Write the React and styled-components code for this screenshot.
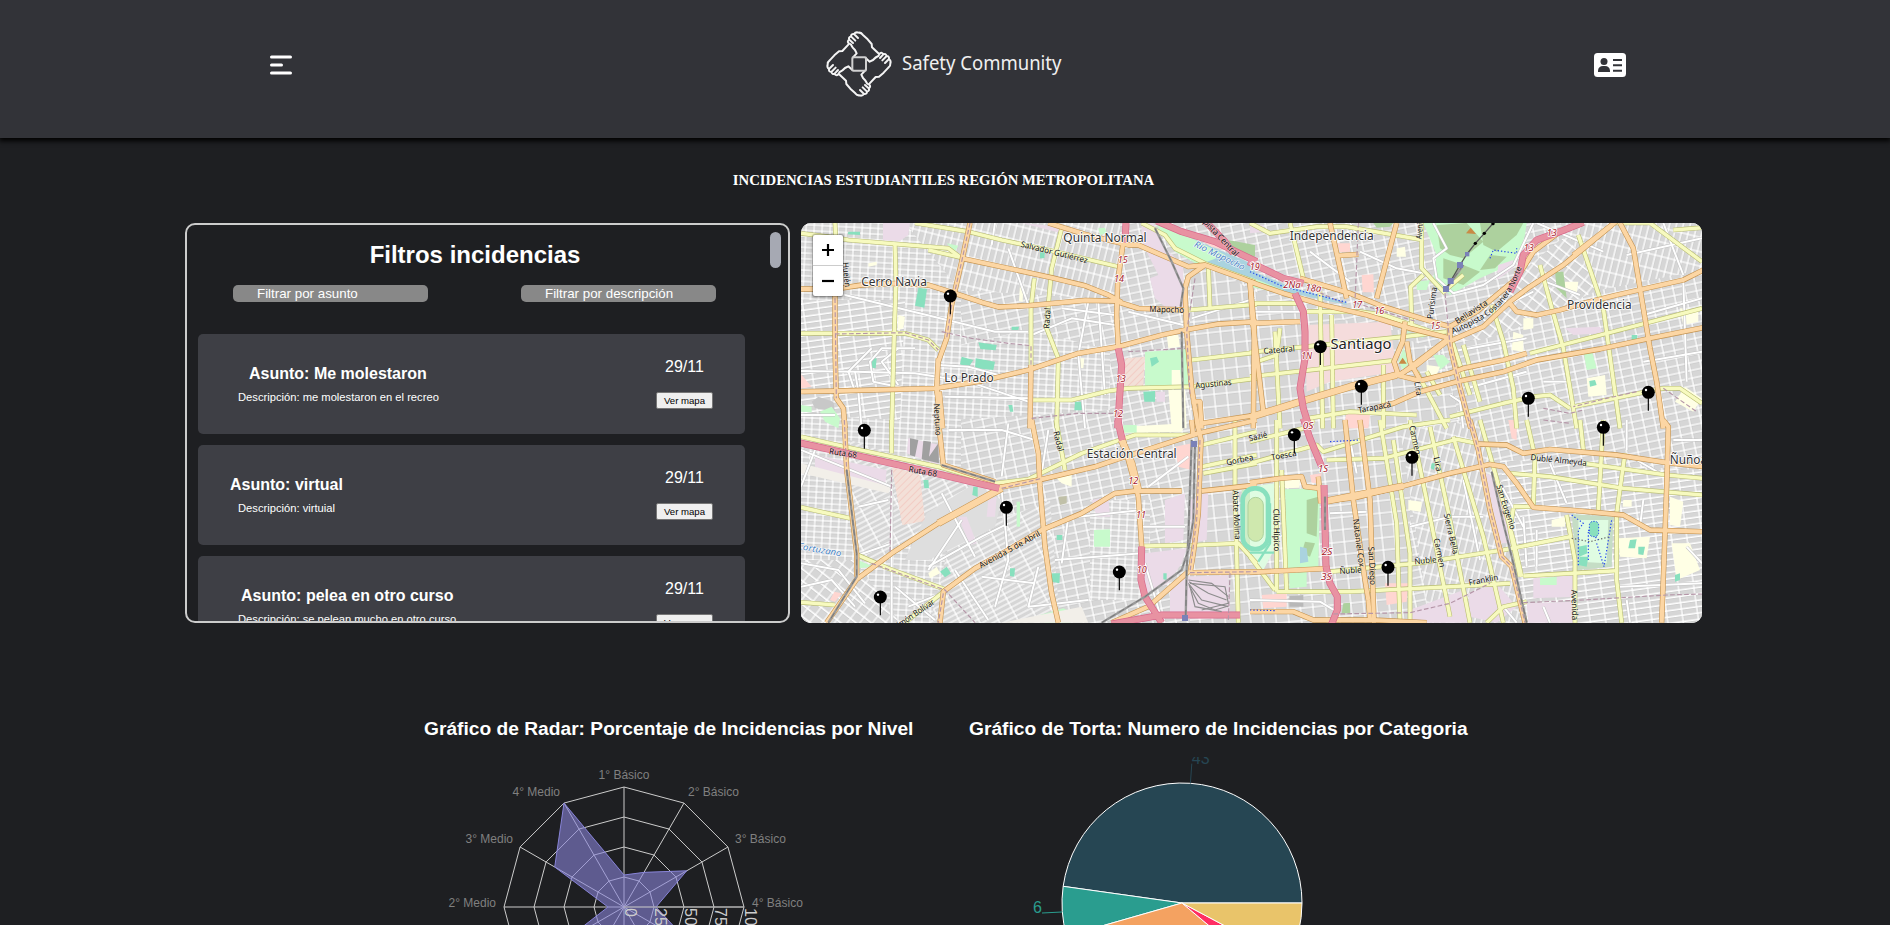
import React from 'react';
import styled, { createGlobalStyle } from 'styled-components';

const GlobalStyle = createGlobalStyle`
  *, *::before, *::after { box-sizing: border-box; }
  html, body { margin: 0; padding: 0; background: #1e1f22; overflow: hidden; }
`;

const Page = styled.div`
  display: flex;
  flex-direction: column;
  height: 925px;
  overflow: hidden;
  background: #1e1f22;
  color: #fff;
  font-family: "Liberation Sans", Arial, sans-serif;
`;

const Header = styled.header`
  display: grid;
  grid-template-columns: 1fr auto 1fr;
  align-items: center;
  flex: none;
  height: 138px;
  padding: 0 264px 10px 260px;
  background: #323338;
  box-shadow: 0 2px 5px 1px #000;
`;

const HeaderIcon = styled.svg`
  display: block;
  justify-self: ${(p) => p.$side};
  margin-left: ${(p) => (p.$side === 'start' ? '10px' : '0')};
  margin-top: 2px;
`;

const Brand = styled.div`
  display: flex;
  align-items: center;
  gap: 9px;
`;

const BrandName = styled.span`
  width: 160px;
  font: 20px/28px "Noto Sans", sans-serif;
  color: #f0f0f0;
  white-space: nowrap;
  transform: scaleX(0.925);
  transform-origin: left;
  margin-top: -2px;
`;

const PageTitle = styled.h1`
  margin: 33px 0 34px;
  font: bold 14.72px/18px "Liberation Serif", "Times New Roman", serif;
  text-align: center;
  padding-right: 3px;
`;

const Overview = styled.section`
  display: flex;
  flex: none;
  gap: 11px;
  height: 400px;
  padding-left: 185px;
`;

const Panel = styled.div`
  display: flex;
  width: 605px;
  padding: 0 7px 0 11px;
  border: 2px solid #ccc;
  border-radius: 10px;
  overflow: hidden;
`;

const PanelBody = styled.div`
  width: 547px;
  height: 396px;
  overflow: hidden;
`;

const PanelTitle = styled.h2`
  margin: 16px 0 16px;
  padding-left: 7px;
  font-size: 24px;
  line-height: 28px;
  text-align: center;
`;

const Filters = styled.div`
  display: flex;
  justify-content: space-between;
  padding: 0 29px 0 35px;
  margin-bottom: 32px;
`;

const FilterInput = styled.input`
  width: 195px;
  height: 17px;
  padding: 0 24px;
  border: 0;
  border-radius: 5px;
  background: #888;
  color: #fff;
  font: 13.33px/17px "Liberation Sans", Arial, sans-serif;
  &::placeholder { color: #fff; opacity: 1; }
`;

const Cards = styled.div`
  display: flex;
  flex-direction: column;
  gap: 11px;
`;

const Card = styled.article`
  display: flex;
  justify-content: space-between;
  flex: none;
  height: 100px;
  padding: 0 32px 0 0;
  border-radius: 5px;
  background: #3e3f45;
`;

const CardText = styled.div`
  padding: 31px 0 0 40px;
`;

const Subject = styled.h3`
  margin: 0 0 8px ${(p) => p.$indent}px;
  font-size: 16px;
  line-height: 18px;
`;

const Description = styled.p`
  margin: 0;
  font-size: 11.2px;
  line-height: 13px;
`;

const CardSide = styled.div`
  display: flex;
  flex-direction: column;
  align-items: center;
  padding-top: 24px;
`;

const DateText = styled.span`
  font-size: 16px;
  line-height: 18px;
`;

const MapButton = styled.button`
  width: 57px;
  height: 17px;
  margin-top: 16px;
  padding: 0;
  border: 1px solid #767676;
  border-radius: 2px;
  background: #efefef;
  color: #000;
  font: 9.6px/14px "Liberation Sans", Arial, sans-serif;
`;

const ScrollThumb = styled.div`
  width: 11px;
  height: 36px;
  margin: 7px 0 0 auto;
  border-radius: 6px;
  background: #a6a9b3;
`;

const MapBox = styled.div`
  position: relative;
  width: 901px;
  height: 400px;
  border-radius: 10px;
  overflow: hidden;
  background: #ddd;
  svg { display: block; }
`;

const ZoomControl = styled.div`
  position: absolute;
  left: 12px;
  top: 12px;
  display: flex;
  flex-direction: column;
  border-radius: 2px;
  background: #fff;
  box-shadow: 0 0 0 1px rgba(0, 0, 0, 0.18), 0 1px 3px 1px rgba(0, 0, 0, 0.25);
`;

const ZoomButton = styled.button`
  display: grid;
  place-items: center;
  width: 30px;
  height: ${(p) => (p.$divided ? 31 : 30)}px;
  padding: 0;
  border: 0;
  border-bottom: ${(p) => (p.$divided ? '1px solid #ccc' : '0')};
  background: none;
`;

const Charts = styled.section`
  display: flex;
  flex: none;
  margin-top: 95px;
  padding-left: 424px;
  gap: 55px;
`;

const Chart = styled.div`
  width: ${(p) => p.$width}px;
`;

const ChartTitle = styled.h2`
  margin: 0;
  font-size: 19.2px;
  line-height: 22px;
  white-space: nowrap;
`;

const ChartSvg = styled.svg`
  display: block;
  margin-top: 17px;
  font-family: "Liberation Sans", Arial, sans-serif;
`;

const MAP = '"Noto Sans", sans-serif';

/* One entry per map tile: coordinates are in thirds of a pixel from the tile origin. */
const tiles = [
  {
    id: 'nw', x: 795, y: 215,
    areas: [
      ['#ebdbe8', '264,24 345,24 340,60 315,78 264,76'], ['#ebdbe8', '680,24 850,40 800,55'],
      ['#ebdbe8', '1040,24 1075,24 1110,100 1165,150 1165,275 1110,275 1080,250 1065,190 1090,180 1040,80'],
      ['#aad3df', '1120,40 1380,150 1380,200 1130,100'], ['#c8facc', '1080,24 1130,40 1290,120 1210,150 1140,110'],
      ['#add19e', '1300,75 1380,90 1380,125 1320,115'], ['#ffd6d1', '1225,80 1290,70 1310,110 1250,95'],
      ['#f3e0d8', '990,430 1050,425 1045,512 985,515'], ['#c8facc', '1050,410 1175,403 1180,515 1050,512'],
      ['#ffffe5', '1115,360 1150,360 1155,395 1120,400'], ['#88e0be', '1065,430 1085,425 1092,440 1070,455'],
      ['#88e0be', '370,218 396,222 388,278 360,272'], ['#88e0be', '550,382 605,390 602,406 556,402'],
      ['#88e0be', '500,425 535,435 520,458 495,448'], ['#88e0be', '542,430 600,440 595,465 540,460'],
      ['#c8facc', '455,85 490,92 480,110'], ['#88e0be', '160,50 195,50 195,60 158,58'],
      ['#88e0be', '230,430 245,430 242,460 230,458'], ['#88e0be', '735,112 750,112 748,130 735,130'],
      ['#88e0be', '840,560 865,560 862,586 838,586'], ['#88e0be', '1045,530 1080,528 1080,560 1048,560'],
      ['#ffffe5', '1130,465 1155,465 1160,510 1130,510'], ['#ffffe5', '1120,525 1170,525 1175,640 1130,640'],
      ['#ebdbe8', '1082,530 1110,530 1110,560 1085,560'], ['#c8c8c8', '50,560 70,545 115,560 120,590 60,580'],
      ['#c8facc', '18,570 50,575 50,592 18,590'], ['#c8facc', '75,590 110,575 135,610 130,640 90,620'],
      ['#ffd6d1', '18,478 50,515 18,520'], ['#ffffe5', '310,300 330,305 325,340 308,345'],
      ['#ffffe5', '675,210 685,212 683,260 672,258'], ['#ffffe5', '850,430 868,430 865,460 848,458'],
      ['#88e0be', '650,335 672,335 670,345 650,345'], ['#ffffe5', '220,145 245,140 245,150 220,155'],
      ['#88e0be', '640,570 652,570 655,590 645,590'], ['#c8facc', '910,40 930,38 935,55 915,60'],
    ],
    yellow: [
      '18,55 120,68 160,75 460,100 500,130', '120,24 122,65', '300,90 303,200 298,350 290,640', '400,105 500,128',
      '360,24 520,50 620,75 760,105 970,155', '800,40 770,160 760,270 755,340 790,430 785,640',
      '718,190 708,280 708,450', '18,355 330,355 400,375 430,405', '1040,24 1110,60 1140,100 1230,145 1380,200',
      '1240,150 1245,280', '1180,285 1385,268', '710,555 830,555 940,528 1000,520 1190,515 1385,490', '1190,435 1385,412',
    ],
    orange: [
      '18,222 120,222 200,210 300,205 400,210 470,232 560,262 610,276 700,272 870,256 960,258 1030,280 1175,285',
      '120,220 120,400 124,550 145,580 150,640', '525,24 500,140 470,270 455,370 430,440',
      '500,130 650,162 770,188 870,212 940,240 980,262', '760,24 870,58 1000,90 1030,90 1110,125 1180,155 1230,150 1340,190 1380,205',
      '1230,150 1180,185 1170,220 1175,350 1190,520 1210,640', '985,80 968,200 965,300 970,400',
      '18,530 120,528 420,520 560,498 700,465 850,415 970,395 1100,360 1180,343 1270,327 1385,320',
      '708,450 705,640', '1365,200 1378,340 1375,640', '1220,640 1215,560 1190,560',
      '430,430 425,520 440,640', '1220,625 1385,600',
    ],
    wide: ['430,530 440,640'],
    pink: ['993,24 990,82', '970,400 980,450 968,640', '1085,18 1160,50 1260,80 1385,140', '1230,18 1290,80 1315,115'],
    rail: ['1080,40 1130,140 1165,220 1157,275', '1160,350 1165,640'],
    dash: ['440,350 530,370 640,385 708,392 708,450', '525,24 500,140 470,270 455,370', '120,357 330,353 400,375 430,405', '1200,190 1175,350 1185,540', '1000,410 1170,400', '710,610 850,595 960,595', '120,250 124,550'],
    white: ['18,468 180,470 360,475 520,500 700,560', '150,240 600,350 700,350', '180,470 190,530 200,640', '430,450 520,455 610,480', '230,400 160,470 180,530', '600,24 590,90', '710,360 830,310 960,330', '18,600 120,600', '360,400 260,400 225,440 235,500 330,520', '310,400 260,440 310,510', '450,545 700,550', '800,280 960,300', '1000,290 1165,330', '640,100 700,270', '880,260 850,420 870,640', '910,260 930,540', '1380,250 1190,310'],
    labels: [
      [930, 82, 'Quinta Normal', 250, 0, 'place'], [297, 213, 'Cerro Navia', 197, 0, 'place'], [522, 500, 'Lo Prado', 148, 0, 'place'],
      [776, 120, 'Salvador Gutiérrez', 206, 14, 'road'], [1115, 292, 'Mapocho', 104, 2, 'road'], [765, 310, 'Radal', 62, -86, 'road'],
      [1256, 515, 'Agustinas', 110, -6, 'road'], [419, 614, 'Neptuno', 96, 87, 'road'], [146, 180, 'Huelén', 74, 84, 'road'],
      [1254, 55, 'Autopista Central', 195, 47, 'road'],
      [983, 144, '15', 30, 0, 'exit'], [972, 202, '14', 30, 0, 'exit'], [977, 500, '13', 30, 0, 'exit'], [969, 605, '12', 30, 0, 'exit'], [1378, 163, '19', 30, 0, 'exit'],
      [1270, 130, 'Río Mapocho', 165, 26, 'water'],
    ],
    pins: [[466, 243]],
  },
  {
    id: 'ne', x: 1250, y: 215,
    areas: [
      ['#c8facc', '520,24 830,24 825,60 800,140 690,190 600,240 550,190 560,120'],
      ['#add19e', '560,30 650,24 700,80 640,130 600,120 570,100'], ['#add19e', '690,24 820,24 800,60 740,110 700,90'], ['#add19e', '580,130 640,150 690,170 640,210 580,190'], ['#add19e', '720,120 770,125 735,160 690,165'],
      ['#aad3df', '0,165 120,215 290,262 290,270 80,225 0,185'], ['#c8facc', '0,185 100,225 90,235 0,215'],
      ['#f5dcdc', '165,330 420,320 440,470 240,500 170,530'], ['#ffd6d1', '335,180 370,178 372,232 338,232'], ['#ffd6d1', '262,85 300,85 300,110 270,112'],
      ['#ebdbe8', '745,150 790,135 790,160 740,195'], ['#c8facc', '360,300 480,340 470,355 520,355 520,370 430,330'],
      ['#c8facc', '445,440 460,400 480,440 460,465'], ['#ffffe5', '440,100 465,95 468,125 440,125'],
      ['#c8facc', '500,200 540,195 530,225 500,225'], ['#ffffe5', '945,200 985,200 980,235 940,225'],
      ['#ebdbe8', '945,340 1050,335 1060,355 970,360'], ['#ffffe5', '790,350 820,360 820,410 785,405'],
      ['#c8facc', '1000,405 1025,405 1040,460 1010,465'], ['#c8facc', '550,420 580,420 600,440 570,465'],
      ['#ffffe5', '1010,490 1065,480 1070,540 1015,545'], ['#88e0be', '1018,498 1035,495 1040,510 1020,515'],
      ['#ffffe5', '1290,280 1345,285 1345,320 1300,330'], ['#ffffe5', '1305,515 1355,550 1330,590 1275,560'],
      ['#add19e', '915,170 940,170 950,250 920,220'], ['#88e0be', '1145,360 1162,360 1162,375 1145,375'],
      ['#ebdbe8', '0,30 40,30 45,50 0,55'], ['#add19e', '370,24 430,24 420,35 380,38'], ['#ffffe5', '530,450 570,455 560,480 530,480'],
      ['#ffffe5', '820,310 850,310 850,340 820,345'], ['#ffd6d1', '290,590 360,600 355,640 280,640'],
    ],
    yellow: [
      '0,24 60,55 200,35 290,35 520,75', '515,24 515,160 585,235', '520,180 482,215 485,330', '0,265 150,265', '170,290 330,290 400,300 600,370',
      '120,24 160,190', '0,485 200,463 425,437', '75,350 90,640', '600,360 660,540', '640,390 690,560', '0,412 460,365 590,350', '725,270 760,380 790,520 800,640',
      '870,150 900,260 940,400 980,640', '985,60 1060,280 1110,640', '840,415 1090,350 1356,280', '600,605 760,565 850,545 900,540 960,580',
      '1356,565 1290,520 1240,520 970,575', '1270,45 1356,38', '1080,24 1200,24 1356,140', '210,230 218,640', '245,300 250,640', '400,450 400,640',
      '500,470 590,640', '160,612 300,590 500,600', '530,470 570,540', '640,180 580,230', '20,440 80,420 90,340',
    ],
    orange: [
      '0,200 100,235 220,270 350,300 480,340 600,370', '150,190 300,235 400,275 520,312 600,335',
      '600,335 680,290 740,240 800,190 850,110 930,50 1000,24', '600,378 700,335 780,260 840,215 940,150 1050,60 1100,18',
      '0,607 150,560 300,515 440,480 510,497 600,475 640,460 760,435 830,415', '380,578 430,565 510,530 620,500 760,470 860,435 1050,402 1200,370 1360,338',
      '1110,24 1150,100 1170,220 1200,400 1220,500 1240,640', '780,265 800,290 860,300 930,285 1000,265 1100,240 1300,195 1360,165',
      '240,24 290,250', '440,24 380,250', '265,122 325,118', '0,325 150,320', '465,320 458,380 432,440 445,480 500,450 600,372',
      '600,340 600,390 625,500 662,640', '470,380 480,440 510,495', '0,200 8,320 40,590', '970,120 1085,30', '450,480 590,375',
    ],
    wide: ['0,607 150,560 300,515 440,480'],
    pink: ['-5,140 100,190 160,205', '135,235 160,290 165,350 165,430 150,520 160,580 180,645', '780,230 810,170 820,120 860,75 930,50 1000,22'],
    rail: ['640,150 588,222'],
    dash: ['325,24 315,260', '585,235 600,390 625,500 662,640', '170,215 280,265', '320,265 500,320', '1160,530 1070,550 970,575', '880,580 960,595 1000,585', '1240,520 1340,590'],
    white: ['550,24 590,100 550,130 560,190 610,235 700,210 790,150 850,24', '0,290 150,290', '330,110 440,160 520,175', '600,410 830,370', '300,24 320,60', '180,110 300,200', '650,520 830,470', '690,310 850,230', '860,24 1060,110', '860,190 990,240', '880,500 960,500', '1180,440 1356,410', '1180,300 1356,250', '1130,120 1356,70', '1240,24 1300,180', '1300,200 1310,500', '640,640 630,560 600,540'],
    lines: [['#24e', '720,130 730,105 800,115 800,100'], ['#24e', '0,170 100,215 290,262']],
    cable: '588,222 602,198 630,150 651,117 676,85 703,55 730,24',
    labels: [
      [245, 74, 'Independencia', 252, 0, 'place'], [333, 401, 'Santiago', 183, 0, 'city'], [1048, 281, 'Providencia', 194, 0, 'place'],
      [88, 413, 'Catedral', 94, -5, 'road'], [375, 585, 'Tarapacá', 100, -11, 'road'], [555, 265, 'Purísima', 96, -82, 'road'], [668, 298, 'Bellavista', 110, -33, 'road'],
      [496, 522, 'Lira', 42, 80, 'road'], [518, 38, 'Avenida', 70, -84, 'road'],
      [14, 165, '19', 30, 0, 'exit'], [126, 220, '2Na', 52, 0, 'exit'], [190, 229, '18a', 48, 4, 'exit'], [322, 280, '17', 30, 0, 'exit'], [388, 296, '16', 30, 0, 'exit'],
      [556, 343, '15', 30, 0, 'exit'], [836, 107, '13', 30, 0, 'exit'], [905, 63, '13', 30, 0, 'exit'], [170, 432, '1N', 32, 0, 'exit'],
    ],
    curved: { path: 'M608 357Q705 318 750 272T817 150', text: 'Autopista Costanera Norte' },
    pins: [[211, 395], [334, 514], [835, 550], [1195, 532]],
  },
  {
    id: 'sw', x: 795, y: 420,
    areas: [
      ['#ebdbe8', '60,105 180,130 275,150 270,200 170,180 60,140'], ['#f2efe9', '18,130 290,200 280,220 18,160'],
      ['#ebdbe8', '340,55 435,75 430,135 335,100'], ['#a0a0a0', '345,55 370,60 360,110 345,105'], ['#a0a0a0', '385,62 408,65 402,110 430,70 432,130 380,118'],
      ['#f3e0d8', '290,140 375,165 390,303 322,315'], ['#dedede', '395,280 540,190 620,240 600,320 400,420 330,420'],
      ['#ebdbe8', '490,290 515,290 545,370 525,375'], ['#ebdbe8', '580,240 605,230 600,290 575,290'],
      ['#c8facc', '897,330 945,328 945,380 897,380'], ['#ffffe5', '985,20 1175,10 1160,35 985,40'], ['#c8facc', '985,15 1025,15 1025,38 985,38'],
      ['#ebdbe8', '1110,240 1170,220 1165,360 1110,370'], ['#ebdbe8', '1050,400 1175,385 1160,430 1120,490 1050,520'],
      ['#ebdbe8', '1185,240 1240,215 1235,360 1190,370'], ['#ebdbe8', '1125,515 1165,470 1300,465 1305,580 1125,580'],
      ['#c8facc', '735,585 805,565 835,580 825,608 750,608'], ['#88e0be', '385,180 400,180 402,205 388,205'], ['#88e0be', '535,200 548,200 548,230 532,225'],
      ['#c8facc', '665,245 675,245 675,320 665,320'], ['#ffffe5', '780,170 830,160 830,200 800,190'], ['#88e0be', '645,445 660,445 658,470 645,468'],
      ['#88e0be', '770,460 795,460 793,490 770,485'], ['#ffffe5', '400,460 425,440 435,460 405,475'], ['#88e0be', '435,455 455,440 468,460 450,472'],
      ['#c0c0a8', '790,230 815,228 815,250 795,255'], ['#ffd6d1', '118,515 140,520 120,545 105,540'], ['#c8facc', '190,420 235,440 190,445'],
      ['#ffd6d1', '1140,80 1190,70 1190,150 1150,140'], ['#cfeec8', '1340,210 1385,205 1385,430 1345,370'], ['#88e0be', '1105,460 1115,460 1115,480 1105,478'],
      ['#88e0be', '785,345 802,345 802,360 785,360'], ['#ebdbe8', '890,240 940,230 945,290 905,290'], ['#f2efe9', '620,608 860,560 880,608'],
    ],
    yellow: [
      '18,50 150,80 430,140 600,190 700,178 860,100 960,65 1020,45 1180,45', '18,262 165,295', '290,0 290,100', '783,0 810,150',
      '188,405 280,445 450,508', '450,512 330,608', '18,547 120,555', '1040,378 1210,375 1330,370 1385,430', '1220,140 1385,105', '1220,75 1385,35', '1320,0 1320,200 1330,608', '1225,160 1385,130',
    ],
    orange: [
      '148,0 155,150 185,400 185,470', '430,0 445,135 600,185', '95,608 185,478 290,400 430,310 620,205', '610,203 740,178 900,140 960,120 1100,75 1210,40 1385,0',
      '435,608 445,515 540,445 640,390 740,330 860,280 960,220 1020,213 1160,213', '710,0 730,100 735,200 750,380 770,520 790,608',
      '985,60 1000,120 1030,230 1040,380', '1205,0 1218,60 1210,280 1195,400 1185,460', '1220,213 1385,195', '1185,458 1385,455', '950,608 1060,560 1180,455', '1190,0 1195,50',
    ],
    wide: ['620,205 430,310', '980,60 1010,130 1030,210'],
    pink: ['968,0 982,60', '12,68 200,110 400,155 612,205', '1040,380 1038,480 1050,530 1100,608', '950,612 1100,585 1335,585'],
    rail: ['155,150 185,400 185,470 100,608', '1190,60 1180,350 1175,450 1172,600', '920,608 1050,530 1160,450 1180,390', '440,135 600,185', '1200,70 1195,300 1180,390'],
    dash: ['148,0 155,150', '290,150 285,400', '230,430 450,510 540,608', '1215,60 1205,300 1185,455', '445,520 430,608', '1185,458 1385,455', '620,205 740,175', '1305,460 1300,600'],
    white: ['18,90 290,200 290,608', '190,405 290,370', '400,440 560,350 640,310', '460,30 620,30 720,60', '18,430 130,450 210,550', '440,220 540,410', '620,210 640,420 600,560', '820,290 800,430', '850,290 1040,270', '730,440 700,560 880,540', '560,470 720,490', '640,10 620,170', '760,30 740,160', '18,500 110,480 180,560', '300,500 420,600', '1050,430 1100,600', '340,560 440,520', '480,450 580,600', '60,90 18,200', '190,260 280,240', '780,420 1040,400', '500,300 400,450', '1040,320 1170,320', '1060,200 1180,110'],
    lines: [['#8d8d8d', '1180,490 1220,540 1300,560'], ['#8d8d8d', '1180,480 1250,490 1300,530'], ['#8d8d8d', '1185,500 1200,560 1280,575'], ['#8d8d8d', '1185,490 1290,500 1300,550 1220,570'], ['#8d8d8d', '1182,485 1240,520 1295,540'], ['#8d8d8d', '1182,495 1210,550 1260,570 1300,558']],
    labels: [
      [1010, 115, 'Estación Central', 270, 0, 'place'], [143, 108, 'Ruta 68', 84, 8, 'road'], [382, 163, 'Ruta 68', 86, 10, 'road'],
      [648, 396, 'Avenida 5 de Abril', 205, -29, 'road'], [362, 590, 'Simón Bolívar', 140, -34, 'road'], [782, 66, 'Radal', 62, 76, 'road'],
      [1316, 285, 'Abate Molina', 148, 87, 'road'], [1336, 128, 'Gorbea', 82, -12, 'road'],
      [72, 398, 'Cortuzano', 134, 10, 'water'], [1015, 192, '12', 30, 0, 'exit'], [1038, 293, '11', 30, 0, 'exit'], [1040, 458, '10', 30, 0, 'exit'],
    ],
    pins: [[208, 31], [634, 262], [256, 531], [973, 456]],
  },
  {
    id: 'se', x: 1250, y: 420,
    areas: [
      ['#dffce2', '0,200 72,190 72,390 40,450 0,400'], ['#c8facc', '105,208 210,205 205,440 112,445'],
      ['#add19e', '170,240 205,230 200,350 170,340'], ['#add19e', '165,365 195,370 180,410 155,400'], ['#aad3df', '150,380 170,385 175,425 150,430'],
      ['#ffffe5', '103,180 150,178 148,203 105,205'], ['#ffd6d1', '180,165 215,160 210,190 185,188'], ['#ffd6d1', '405,490 475,490 470,545 410,555'], ['#ffd6d1', '35,525 110,520 110,560 40,565'],
      ['#b8b8b8', '118,528 160,525 160,560 118,560'], ['#c8facc', '118,460 170,455 170,500 118,505'], ['#c5ddc5', '965,282 1090,290 1085,440 980,450'],
      ['#dffce2', '985,300 1075,300 1070,430 990,425'], ['#88e0be', '985,380 1010,375 1012,400 988,410'], ['#88e0be', '990,410 1015,410 1010,440 985,435'],
      ['#ffffe5', '475,240 515,245 512,275 475,270'], ['#ffffe5', '1260,230 1300,245 1290,320 1260,315'], ['#ffffe5', '1105,355 1200,350 1190,415 1110,410'], ['#ffffe5', '1265,370 1320,370 1350,450 1280,480'],
      ['#88e0be', '1140,360 1160,358 1155,385 1135,385'], ['#88e0be', '1165,380 1185,380 1180,405 1165,403'], ['#ebdbe8', '655,520 740,490 800,560 740,608 660,590'],
      ['#ebdbe8', '830,550 975,545 975,608 835,608'], ['#ebdbe8', '705,160 740,170 790,370 750,370'], ['#ebdbe8', '850,475 970,465 975,530 850,535'], ['#c8facc', '870,475 920,470 920,495 870,495'],
      ['#ffffe5', '905,300 945,290 945,320 905,320'], ['#ebdbe8', '480,570 640,510 660,608 480,608'], ['#88e0be', '545,130 555,130 552,150 542,145'],
      ['#add19e', '280,550 300,548 300,580 275,580'], ['#ffd6d1', '775,0 800,0 800,60 785,55'], ['#88e0be', '1275,465 1290,460 1290,480 1275,485'], ['#ffffe5', '1120,240 1145,240 1145,260 1118,260'],
    ],
    yellow: [
      '0,65 180,20 190,0', '0,130 200,75 220,95 460,20 600,0', '230,120 400,115 620,58 680,70', '80,0 80,515', '95,150 110,515', '80,515 300,515 600,500 780,490', '0,410 75,510', '390,0 440,310 450,608', '430,60 480,400 480,600',
      '480,0 530,240 600,590', '540,20 600,300 660,608', '610,50 700,350 760,608', '690,0 730,140 790,360 815,470', '240,455 500,430 760,390 960,350', '820,468 1100,452', '990,0 1000,90', '780,160 900,170 1120,205 1360,225', '1000,130 1250,165 1360,175',
      '1060,0 1045,270', '1125,100 1100,280 1100,480 1115,608', '950,285 975,420 975,608', '710,608 760,560 830,545', '790,265 780,330 810,470', '850,260 855,110 830,0', '790,260 850,260',
    ],
    orange: [
      '0,188 90,175 155,170 165,200 210,205', '230,243 320,232 460,198 600,160 720,133 760,140 800,190 850,262 980,272 1120,285 1200,330 1360,335',
      '285,0 310,240 345,480 355,540', '330,0 360,240 372,608', '660,0 685,90 720,270 755,410 785,440 825,608', '685,72 770,75 820,100 900,88 1100,105 1250,128',
      '1240,0 1255,20 1250,200 1245,340 1235,608', '0,457 240,445', '1250,128 1360,140', '0,575 130,575 190,600 370,600 530,608', '205,170 212,250', '355,540 360,600',
    ],
    wide: ['230,243 460,198'],
    pink: ['160,-5 180,55 215,140', '222,195 228,440', '228,440 240,490 262,530 262,570 245,612'],
    rail: ['725,155 760,310 790,430 830,608', '225,230 225,330'],
    dash: ['660,0 685,90 720,270 755,410 785,440 825,608', '250,582 480,578 600,550 720,490', '820,548 1000,540 1250,525 1356,522', '880,0 960,10'],
    white: ['820,290 830,440', '900,130 950,250', '300,60 320,160', '240,280 350,275', '1130,0 1130,90', '1160,120 1230,160', '1270,60 1356,60', '1310,380 1356,430', '1110,500 1356,490', '1130,540 1140,608', '740,170 820,320', '480,320 600,290 700,290', '640,180 690,420', '760,560 800,608', '1180,240 1170,320', '860,330 860,440', '880,560 900,608', '0,540 210,545 260,575'],
    lines: [['#24e', '965,285 1000,310 985,330 985,440'], ['#24e', '1040,370 1062,440 1085,300'], ['#24e', '240,65 330,60'], ['#666', '965,355 1020,365 1080,350'], ['#24e', '0,570 80,572'], ['#24e', '1015,420 1015,330 1045,360']],
    track: true,
    labels: [
      [1315, 132, 'Ñuñoa', 112, 0, 'place'], [103, 114, 'Toesca', 76, -10, 'road'], [925, 129, 'Dublé Almeyda', 170, 6, 'road'], [26, 58, 'Sazié', 56, -14, 'road'],
      [71, 330, 'Club Hípico', 128, 89, 'road'], [318, 370, 'Nataniel Cox', 145, 83, 'road'], [358, 438, 'San Diego', 115, 87, 'road'], [302, 460, 'Ñuble', 66, -4, 'road'], [527, 430, 'Ñuble', 66, -6, 'road'],
      [595, 343, 'Sierra Bella', 124, 77, 'road'], [560, 400, 'Carmen', 88, 78, 'road'], [487, 62, 'Carmen', 88, 78, 'road'], [555, 134, 'Lira', 44, 78, 'road'], [760, 264, 'San Eugenio', 140, 72, 'road'],
      [702, 488, 'Franklin', 90, -11, 'road'], [965, 555, 'Avenida', 92, 88, 'road'],
      [174, 28, '0S', 32, 0, 'exit'], [219, 155, '1S', 30, 0, 'exit'], [231, 405, '2S', 32, 0, 'exit'], [229, 479, '3S', 32, 0, 'exit'],
    ],
    pins: [[133, 44], [486, 112], [1060, 22], [414, 442]],
  },
];

const textStyles = {
  place: { fontSize: 37, fill: '#333', stroke: '#fff', strokeWidth: 5 },
  city: { fontSize: 43, fill: '#222', stroke: '#fff', strokeWidth: 5 },
  road: { fontSize: 25, fill: '#111', stroke: '#fff', strokeOpacity: 0.4, strokeWidth: 3 },
  exit: { fontSize: 29, fill: '#a51628', stroke: '#fff', strokeWidth: 5, fontStyle: 'italic' },
  water: { fontSize: 27, fill: '#4b85c4', stroke: '#fff', strokeWidth: 3, fontStyle: 'italic' },
};

const patterns = [
  ['a', 24, 17, 3], ['b', 34, 23, -12], ['c', 20, 42, 14], ['d', 52, 15, -28], ['e', 30, 28, 38], ['f', 46, 19, -8], ['g', 38, 37, -6],
];

/* Districts whose streets run in different directions. */
const districts = [
  ['c', '905,223 1120,223 1120,300 960,290'], ['f', '801,300 905,300 900,420 801,415'], ['c', '960,223 1120,240 1110,298 960,260'],
  ['b', '1030,320 1190,300 1190,350 1030,370'], ['a', '940,350 1030,330 1110,350 1110,410 950,420'],
  ['d', '850,440 1000,490 880,560 855,560'], ['e', '801,560 855,560 900,623 801,623'], ['d', '950,540 1050,500 1060,623 930,623'],
  ['g', '1190,330 1410,330 1410,623 1190,623'], ['b', '1190,223 1300,223 1300,300 1190,270'], ['g', '1190,250 1250,290 1440,350 1460,420 1190,430'],
  ['c', '1400,430 1480,420 1530,623 1430,623'], ['e', '1440,340 1560,240 1600,223 1620,280 1490,340'], ['b', '1480,340 1702,280 1702,430 1500,440'],
  ['c', '1560,223 1702,223 1702,270 1600,290'], ['f', '1500,460 1702,470 1702,623 1520,623'], ['a', '1090,500 1150,500 1150,600 1090,600'],
];

const casings = [
  { key: 'white', color: '#c0c0c0', width: 9 }, { key: 'white', color: '#fff', width: 6 },
  { key: 'yellow', color: '#b9bd72', width: 14 }, { key: 'yellow', color: '#f7fabf', width: 10.5 },
  { key: 'orange', color: '#c4924e', width: 16 }, { key: 'wide', color: '#c4924e', width: 22 },
  { key: 'orange', color: '#fcd6a4', width: 12.5 }, { key: 'wide', color: '#fcd6a4', width: 19 },
  { key: 'pink', color: '#d9678a', width: 21 }, { key: 'pink', color: '#e892a2', width: 17 },
];

function Tile({ tile, children }) {
  return <g transform={`translate(${tile.x} ${tile.y}) scale(.33333)`}>{children}</g>;
}

function CityMap() {
  return (
    <svg width="901" height="400" viewBox="801 223 901 400" fontFamily={MAP}>
      <defs>
        {patterns.map(([id, w, h, a]) => (
          <pattern key={id} id={`grid-${id}`} width={w / 3} height={h / 3} patternUnits="userSpaceOnUse" patternTransform={`rotate(${a})`}>
            <rect width={w / 3} height={h / 3} fill="#d6d6d6" />
            <path d={`M0 1H${w / 3}M1 0V${h / 3}`} stroke="#bdbdbd" strokeWidth="2.2" />
            <path d={`M0 1H${w / 3}M1 0V${h / 3}`} stroke="#fff" strokeWidth="1.5" />
          </pattern>
        ))}
        <pattern id="hatch" width="5" height="5" patternUnits="userSpaceOnUse" patternTransform="rotate(45)">
          <path d="M0 0V5" stroke="#f0a8a0" strokeWidth=".7" />
        </pattern>
      </defs>
      <rect x="801" y="223" width="901" height="400" fill="url(#grid-b)" />
      <rect x="801" y="223" width="160" height="400" fill="url(#grid-a)" />
      {districts.map(([id, pts], i) => <polygon key={i} points={pts} fill={`url(#grid-${id})`} />)}
      {tiles.map((t) => (
        <Tile key={t.id} tile={t}>
          {t.areas.map(([fill, pts], i) => <polygon key={i} points={pts} fill={fill} />)}
        </Tile>
      ))}
      <polygon points="892,467 920,475 925,521 902,525" fill="url(#hatch)" />
      <polygon points="1125,358 1145,357 1143,386 1123,387" fill="url(#hatch)" />
      {casings.map((c, i) => tiles.map((t) => (
        <Tile key={`${t.id}${i}`} tile={t}>
          {t[c.key].map((pts, j) => (
            <polyline key={j} points={pts} fill="none" stroke={c.color} strokeWidth={c.width} strokeLinejoin="round" />
          ))}
        </Tile>
      )))}
      {tiles.map((t) => (
        <Tile key={t.id} tile={t}>
          {t.dash.map((pts, i) => <polyline key={i} points={pts} fill="none" stroke="#b596a8" strokeWidth="3.5" strokeDasharray="14 7" />)}
          {t.rail.map((pts, i) => (
            <g key={i} fill="none">
              <polyline points={pts} stroke="#999" strokeWidth="7" />
              <polyline points={pts} stroke="#777" strokeWidth="3" strokeDasharray="18 12" />
            </g>
          ))}
          {(t.lines || []).map(([color, pts], i) => <polyline key={i} points={pts} fill="none" stroke={color} strokeWidth="3.5" strokeDasharray={color === '#8d8d8d' ? 'none' : '4 6'} />)}
          {t.track && (
            <g fill="none">
              <rect x="-22" y="205" width="76" height="182" rx="36" stroke="#88e0be" strokeWidth="14" />
              <rect x="-6" y="232" width="46" height="132" rx="23" fill="#cfe8ae" stroke="#add19e" strokeWidth="3" />
              <path d="M0 398H72M60 250V370L25 425" stroke="#88e0be" strokeWidth="7" />
              <rect x="1018" y="304" width="28" height="46" rx="12" fill="#88e0be" stroke="#24e" strokeWidth="3" strokeDasharray="4 5" />
            </g>
          )}
          {t.cable && (
            <g>
              <polyline points={t.cable} fill="none" stroke="#555" strokeWidth="4" />
              {[[588, 222], [602, 198], [630, 150]].map(([x, y]) => <rect key={x} x={x - 9} y={y - 9} width="18" height="18" fill="#7a81b8" />)}
              <rect x="645" y="111" width="13" height="13" fill="#7a81b8" />
              <circle cx="676" cy="85" r="5" /><circle cx="703" cy="55" r="5" /><circle cx="729" cy="26" r="5" />
              <path d="M648 55L662 38L678 57ZM446 446L458 428L470 446Z" fill="#c98a45" />
            </g>
          )}
        </Tile>
      ))}
      <rect x="1191" y="441" width="6" height="6" fill="#7a81b8" />
      <rect x="1182" y="615" width="6" height="6" fill="#7a81b8" />
      {tiles.map((t) => (
        <Tile key={t.id} tile={t}>
          {t.labels.map(([x, y, text, w, a, kind], i) => (
            <text key={i} x={x} y={y} textLength={w} lengthAdjust="spacingAndGlyphs" textAnchor="middle" paintOrder="stroke" strokeLinejoin="round"
              transform={a ? `rotate(${a} ${x} ${y})` : undefined} {...textStyles[kind]}>{text}</text>
          ))}
          {t.curved && (
            <>
              <path id="motorway" d={t.curved.path} fill="none" />
              <text paintOrder="stroke" {...textStyles.road} fontSize="24"><textPath href="#motorway">{t.curved.text}</textPath></text>
            </>
          )}
        </Tile>
      ))}
      {tiles.map((t) => (
        <Tile key={t.id} tile={t}>
          {t.pins.map(([x, y]) => (
            <g key={x}>
              <path d={`M${x} ${y + 15}V${y + 55}`} stroke="#000" strokeWidth="3.5" />
              <circle cx={x} cy={y} r="19.5" fill="#000" />
              <circle cx={x - 7} cy={y - 7} r="3.6" fill="#fff" />
            </g>
          ))}
        </Tile>
      ))}
    </svg>
  );
}

const HAND = 'M84 50L76 45Q72 39 79 35L90 45M79 35Q75 28 84 25L97 38M84 25Q84 17 93 18L105 30M93 18Q98 11 107 14Q114 13 119 20L134 34L146 48L147 58L166 76M84 50Q87 58 96 66L101 76L90 88';

function Logo() {
  return (
    <svg width="68" height="68" viewBox="6 6 204 204" fill="none" stroke="#f4f4f4" strokeWidth="6" strokeLinecap="round" strokeLinejoin="round">
      {[0, 90, 180, 270].map((a) => <path key={a} d={HAND} transform={`rotate(${a} 108 108)`} />)}
      <rect x="88" y="88" width="41" height="40" rx="3" stroke="#d0d0d0" />
    </svg>
  );
}

const levels = ['1° Básico', '2° Básico', '3° Básico', '4° Básico', '', '', '', '', '', '2° Medio', '3° Medio', '4° Medio'];
const levelRadii = [32, 40, 72.4, 32, 79, 38, 30, 44, 71, 16, 80, 120];
const polar = (i, r) => {
  const t = ((i * 30 - 90) * Math.PI) / 180;
  return [200 + r * Math.cos(t), 150 + r * Math.sin(t)];
};
const levelLabelAt = [[200, 22, 'middle'], [264, 39, 'start'], [311, 86, 'start'], [328, 150, 'start'], null, null, null, null, null, [72, 150, 'end'], [89, 86, 'end'], [136, 39, 'end']];

function Radar() {
  return (
    <ChartSvg width="490" height="168" viewBox="0 0 490 168">
      <g fill="none" stroke="#ccc">
        {[30, 60, 90, 120].map((r) => <polygon key={r} points={levels.map((_, i) => polar(i, r).join()).join(' ')} />)}
        {levels.map((_, i) => {
          const [x, y] = polar(i, 120);
          return <line key={i} x1="200" y1="150" x2={x} y2={y} />;
        })}
      </g>
      <polygon points={levelRadii.map((r, i) => polar(i, r).join()).join(' ')} fill="#8884d8" fillOpacity=".6" stroke="#8884d8" />
      <g fontSize="12" fill="#808080">
        {levelLabelAt.map((p, i) => p && <text key={i} x={p[0]} y={p[1]} textAnchor={p[2]}>{levels[i]}</text>)}
      </g>
      <path d="M200 150H320" stroke="#aaa" />
      <g fontSize="16" fill="#ccc">
        {[0, 25, 50, 75, 100].map((v, i) => <text key={v} transform={`translate(${201 + i * 30} 151) rotate(90)`}>{v}</text>)}
      </g>
    </ChartSvg>
  );
}

const slices = [[43, '#264653'], [6, '#2a9d8f'], [31, '#f4a261'], [3, '#ff2e63'], [7, '#e9c46a']];

function Pie() {
  let start = 0;
  const point = (deg) => {
    const t = (deg * Math.PI) / 180;
    return `${213 + 120 * Math.cos(t)} ${146 - 120 * Math.sin(t)}`;
  };
  return (
    <ChartSvg width="500" height="168" viewBox="0 0 500 168">
      {slices.map(([n, color]) => {
        const end = start + n * 4;
        const d = `M213 146L${point(start)}A120 120 0 0 0 ${point(end)}Z`;
        start = end;
        return <path key={color} d={d} fill={color} stroke="#fff" />;
      })}
      <path d="M221.4 26.3L222.8 6.6" stroke="#264653" />
      <path d="M93 155L73 156" stroke="#2a9d8f" />
      <text x="222.8" y="6.5" fontSize="16" fill="#264653">43</text>
      <text x="73" y="156" fontSize="16" fill="#2a9d8f" textAnchor="end">6</text>
    </ChartSvg>
  );
}

const incidents = [
  { subject: 'Me molestaron', description: 'me molestaron en el recreo', indent: 11 },
  { subject: 'virtual', description: 'virtuial', indent: -8 },
  { subject: 'pelea en otro curso', description: 'se pelean mucho en otro curso', indent: 3 },
];

export default function App() {
  return (
    <Page>
      <GlobalStyle />
      <Header>
        <HeaderIcon $side="start" width="22" height="20" viewBox="0 0 22 20" fill="none" stroke="#fff" strokeWidth="3" strokeLinecap="round">
          <path d="M1.5 2H20.5M1.5 10H11.5M1.5 18H20.5" />
        </HeaderIcon>
        <Brand>
          <Logo />
          <BrandName>Safety Community</BrandName>
        </Brand>
        <HeaderIcon $side="end" width="32" height="24" viewBox="0 0 32 24">
          <rect width="32" height="24" rx="3.5" fill="#fff" />
          <circle cx="10" cy="8.5" r="3.5" fill="#323338" />
          <path d="M4 19V17.5Q4.5 13 9 13H11Q15.5 13 16 17.5V19Z" fill="#323338" />
          <path d="M19 7H28M19 12.3H28M19 17.7H28" stroke="#323338" strokeWidth="2" />
        </HeaderIcon>
      </Header>
      <PageTitle>INCIDENCIAS ESTUDIANTILES REGIÓN METROPOLITANA</PageTitle>
      <Overview>
        <Panel>
          <PanelBody>
            <PanelTitle>Filtros incidencias</PanelTitle>
            <Filters>
              <FilterInput placeholder="Filtrar por asunto" />
              <FilterInput placeholder="Filtrar por descripción" />
            </Filters>
            <Cards>
              {incidents.map((item) => (
                <Card key={item.subject}>
                  <CardText>
                    <Subject $indent={item.indent}>Asunto: {item.subject}</Subject>
                    <Description>Descripción: {item.description}</Description>
                  </CardText>
                  <CardSide>
                    <DateText>29/11</DateText>
                    <MapButton>Ver mapa</MapButton>
                  </CardSide>
                </Card>
              ))}
            </Cards>
          </PanelBody>
          <ScrollThumb />
        </Panel>
        <MapBox>
          <CityMap />
          <ZoomControl>
            <ZoomButton $divided aria-label="+">
              <svg width="12" height="12" stroke="#000" strokeWidth="2.2"><path d="M0 6H12M6 0V12" /></svg>
            </ZoomButton>
            <ZoomButton aria-label="−">
              <svg width="12" height="12" stroke="#000" strokeWidth="2.2"><path d="M0 6H12" /></svg>
            </ZoomButton>
          </ZoomControl>
        </MapBox>
      </Overview>
      <Charts>
        <Chart $width={490}>
          <ChartTitle>Gráfico de Radar: Porcentaje de Incidencias por Nivel</ChartTitle>
          <Radar />
        </Chart>
        <Chart $width={500}>
          <ChartTitle>Gráfico de Torta: Numero de Incidencias por Categoria</ChartTitle>
          <Pie />
        </Chart>
      </Charts>
    </Page>
  );
}
